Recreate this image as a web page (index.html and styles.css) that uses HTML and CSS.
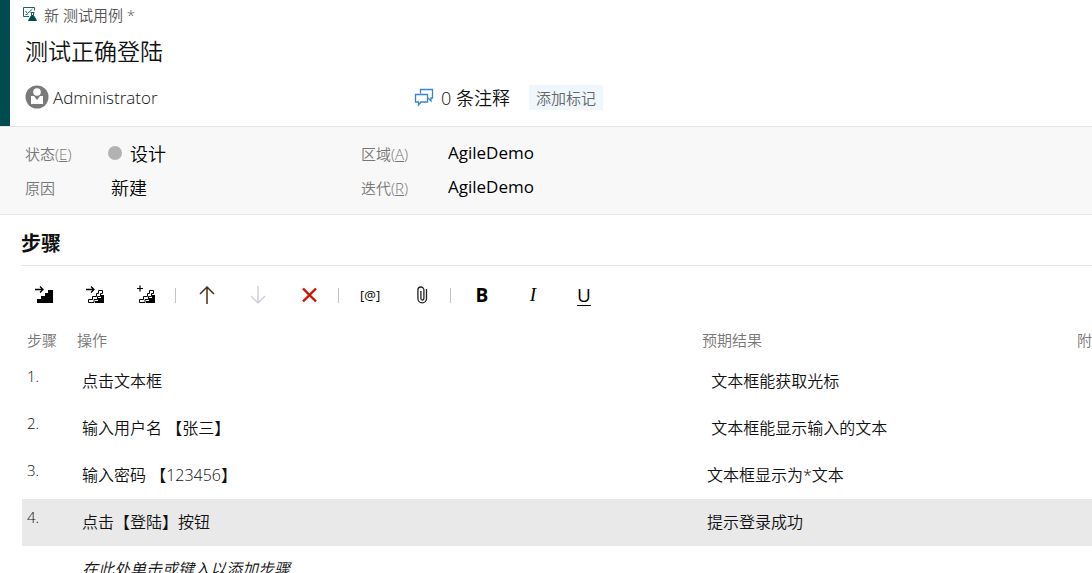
FILE: index.html
```html
<!DOCTYPE html>
<html lang="zh-CN">
<head>
  <meta charset="utf-8">
  <title>新 测试用例</title>
  <link rel="stylesheet" href="styles.css">
</head>
<body>
  <header class="header">
    <div class="crumb">
      <svg class="crumb-icon" width="14" height="14" viewBox="0 0 14 14" fill="none" stroke="#1c6468">
        <path d="M6 9.500H.5V.5h11v3M2.500 4l2 2.500 5-4.500M2.500 7.500h2"/>
        <path d="M7.500 5.500h4M8.500 5.500v3M10.500 5.500v3"/>
        <path d="M8.500 8.500h2l3 5h-8z" fill="#004b50" stroke="#004b50"/>
      </svg>
      <span>新 测试用例 *</span>
    </div>
    <input class="title" type="text" value="测试正确登陆" aria-label="标题">
    <div class="meta">
      <div class="assignee">
        <svg width="24" height="24" viewBox="0 0 24 24">
          <circle cx="12" cy="12" r="11.500" fill="#7a7a7a"/>
          <circle cx="12" cy="7" r="3.800" fill="#fff"/>
          <path d="M6 11h3l3 4 3-4h3v8H6z" fill="#fff"/>
        </svg>
        <span>Administrator</span>
      </div>
      <a class="comments" href="#">
        <svg width="20" height="20" viewBox="0 0 20 20" fill="none" stroke="#3a84cc" stroke-width="1.300">
          <path d="M6.500 6.500v-4h12v8.500h-1.500v3l-3-3"/>
          <path d="M1.500 7.500h12v7.500H7l-2.500 3v-3h-3z"/>
        </svg>
        <span>0 条注释</span>
      </a>
      <button class="tag" type="button">添加标记</button>
    </div>
  </header>

  <section class="fields">
    <label for="state">状态(<u>E</u>)</label>
    <div class="state">
      <span class="dot"></span>
      <input id="state" type="text" value="设计" accesskey="e">
    </div>
    <label for="area">区域(<u>A</u>)</label>
    <input id="area" class="path" type="text" value="AgileDemo" accesskey="a">
    <label for="reason">原因</label>
    <input id="reason" type="text" value="新建">
    <label for="iteration">迭代(<u>R</u>)</label>
    <input id="iteration" class="path" type="text" value="AgileDemo" accesskey="r">
  </section>

  <main class="steps">
    <h2>步骤</h2>
    <div class="toolbar">
      <button type="button" aria-label="插入步骤">
        <svg width="20" height="20" viewBox="0 0 20 20">
          <path d="M1 4.500h8M6 1.500l3 3-3 3" fill="none" stroke="#000" stroke-width="1.300"/>
          <path d="M3 18v-4h4v-3h4V8h3V5h5v13z"/>
        </svg>
      </button>
      <button type="button" aria-label="插入共享步骤">
        <svg width="20" height="20" viewBox="0 0 20 20">
          <path d="M1 4.500h8M6 1.500l3 3-3 3" fill="none" stroke="#000" stroke-width="1.300"/>
          <path d="M8 17.500H3.500v-3h4v-3h4v-3h2v-3h4v3h-2v3h-3v3H9v3z" fill="none" stroke="#000"/>
          <path d="M10 18v-2h3v-3h3v-3h3v8z"/>
        </svg>
      </button>
      <button type="button" aria-label="创建共享步骤">
        <svg width="20" height="20" viewBox="0 0 20 20">
          <path d="M1 3.500h6M4 .5v6" fill="none" stroke="#000" stroke-width="1.200"/>
          <path d="M8 17.500H3.500v-3h4v-3h4v-3h2v-3h4v3h-2v3h-3v3H9v3z" fill="none" stroke="#000"/>
          <path d="M10 18v-2h3v-3h3v-3h3v8z"/>
        </svg>
      </button>
      <span class="sep"></span>
      <button type="button" aria-label="上移">
        <svg width="20" height="20" viewBox="0 0 20 20" fill="none" stroke="#4a2f10" stroke-width="1.500">
          <path d="M10 19V2M3 9l7-7 7 7"/>
        </svg>
      </button>
      <button type="button" aria-label="下移" disabled>
        <svg width="20" height="20" viewBox="0 0 20 20" fill="none" stroke="#d0d0d8" stroke-width="1.500">
          <path d="M10 1v17M3 11l7 7 7-7"/>
        </svg>
      </button>
      <button type="button" aria-label="删除">
        <svg width="20" height="20" viewBox="0 0 20 20" fill="none" stroke="#d01000" stroke-width="2.400">
          <path d="M4 3.500l13 13M17 3.500l-13 13"/>
        </svg>
      </button>
      <span class="sep"></span>
      <button class="param" type="button" aria-label="插入参数">[@]</button>
      <button type="button" aria-label="附件">
        <svg width="20" height="20" viewBox="0 0 20 20" fill="none" stroke="#222" stroke-width="1.300">
          <path d="M15.500 4v9.500a4.300 4.300 0 0 1-8.600 0V5a3 3 0 0 1 6 0v8.500a1.500 1.500 0 0 1-3 0V6"/>
        </svg>
      </button>
      <span class="sep"></span>
      <button class="bold" type="button">B</button>
      <button class="italic" type="button">I</button>
      <button class="underline" type="button">U</button>
    </div>

    <table>
      <colgroup>
        <col class="col-num">
        <col class="col-action">
        <col class="col-result">
        <col class="col-files">
      </colgroup>
      <thead>
        <tr><th>步骤</th><th>操作</th><th>预期结果</th><th>附件</th></tr>
      </thead>
      <tbody>
        <tr><td class="num">1.</td><td>点击文本框</td><td>&nbsp;文本框能获取光标</td><td></td></tr>
        <tr><td class="num">2.</td><td>输入用户名 【张三】</td><td>&nbsp;文本框能显示输入的文本</td><td></td></tr>
        <tr><td class="num">3.</td><td>输入密码 【123456】</td><td>文本框显示为*文本</td><td></td></tr>
        <tr class="selected"><td class="num">4.</td><td>点击【登陆】按钮</td><td>提示登录成功</td><td></td></tr>
        <tr class="hint"><td></td><td>在此处单击或键入以添加步骤</td><td></td><td></td></tr>
      </tbody>
    </table>
  </main>
</body>
</html>
```
FILE: styles.css
```css
* { box-sizing: border-box; }

body {
  margin: 0;
  height: 100vh;
  overflow: hidden;
  background: #fff;
  color: #111;
  font-family: "Open Sans", "Noto Sans CJK SC", sans-serif;
  font-size: 16px;
  font-weight: 350;
}

input, button {
  margin: 0;
  padding: 0;
  border: 0;
  background: none;
  color: inherit;
  font: inherit;
}

a { color: inherit; text-decoration: none; }
svg { display: block; flex: none; }

/* header */
.header {
  border-left: 10px solid #004b50;
  padding: 4px 0 16px 15px;
  box-shadow: 0 1px #e6e6e6;
}
.crumb {
  display: flex;
  align-items: center;
  gap: 7px;
  height: 20px;
  margin-left: -2px;
  color: #555;
  font-size: 15px;
}
.title {
  display: block;
  width: 100%;
  height: 34px;
  margin: 10px 0 16px;
  font-size: 23px;
  line-height: 34px;
}
.meta {
  display: flex;
  align-items: center;
  height: 26px;
}
.assignee {
  display: flex;
  align-items: center;
  gap: 4px;
  width: 389px;
  font-size: 17px;
}
.comments {
  display: flex;
  align-items: center;
  gap: 7px;
  margin-right: 19px;
  font-size: 18px;
}
.tag {
  height: 25px;
  padding: 0 7px;
  background: #eff6fc;
  color: #666;
  font-size: 15px;
}

/* fields */
.fields {
  display: grid;
  grid-template-columns: 83px 253px 87px 1fr;
  grid-auto-rows: 34px;
  align-items: center;
  margin-top: 1px;
  padding: 9px 0 10px 25px;
  border-bottom: 1px solid #e6e6e6;
  background: #f8f8f8;
}
.fields label { color: #777; font-size: 15px; }
.fields input {
  width: 100%;
  min-width: 0;
  padding-left: 3px;
  color: #000;
  font-size: 18px;
}
.fields .path {
  padding: 0 0 2px;
  font-size: 17px;
  font-weight: 400;
}
.state { display: flex; align-items: center; gap: 5px; }
.dot {
  flex: none;
  width: 14px;
  height: 14px;
  border-radius: 50%;
  background: #b2b2b2;
}

/* steps */
.steps { padding-left: 21px; }
h2 {
  margin: 0;
  padding: 14px 0 7px;
  border-bottom: 1px solid #e6e6e6;
  font-size: 20px;
  font-weight: 700;
  line-height: 29px;
}
.toolbar {
  display: flex;
  align-items: center;
  height: 58px;
  padding-left: 13px;
}
.toolbar button {
  width: 20px;
  margin-right: 31px;
  color: #000;
  font-size: 19px;
  line-height: 20px;
}
.sep {
  width: 1px;
  height: 15px;
  margin: 0 21px 0 -12px;
  background: #c4c4c4;
}
.toolbar .param { font-size: 13px; font-weight: 400; }
.toolbar .bold { font-weight: 700; }
.toolbar .italic { font-family: "Liberation Serif", serif; font-style: italic; font-weight: 400; }
.toolbar .underline { font-weight: 400; text-decoration: underline; text-underline-offset: 3px; }

table {
  table-layout: fixed;
  width: 1150px;
  margin-left: 1px;
  border-collapse: collapse;
}
.col-num { width: 50px; }
.col-action { width: 625px; }
.col-result { width: 375px; }
th {
  height: 34px;
  padding: 0 5px 4px;
  color: #777;
  font-size: 15px;
  font-weight: 350;
  text-align: left;
}
td { height: 47px; padding: 0 10px 4px; }
.num { padding: 8px 5px 0; font-size: 15px; vertical-align: top; }
.selected { background: #e9e9e9; }
.hint { font-style: italic; }
```
